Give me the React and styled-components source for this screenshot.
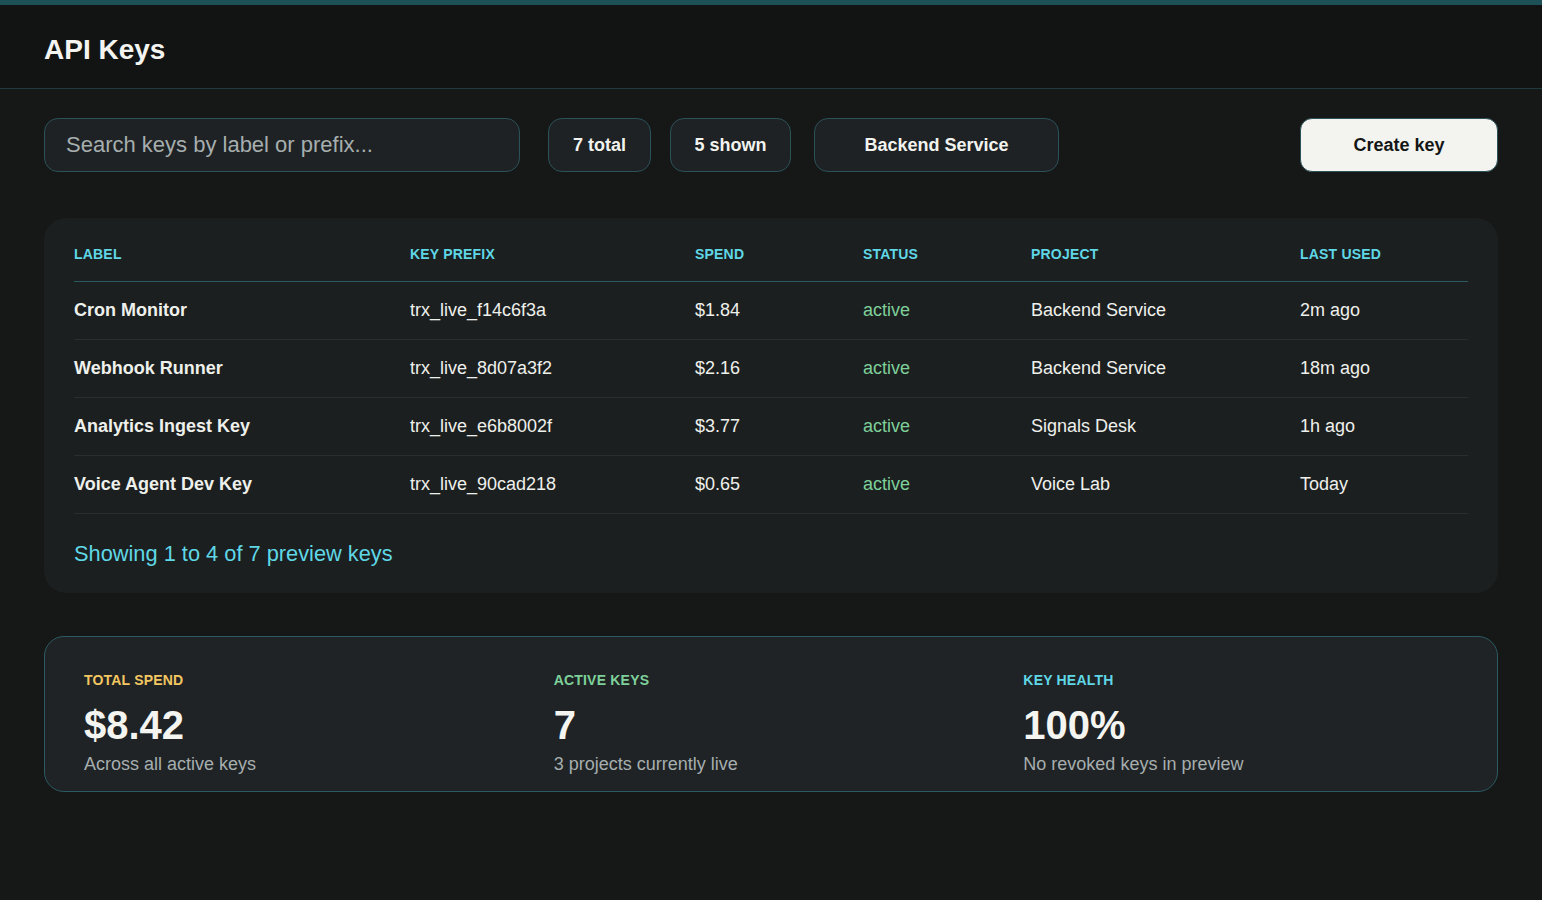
import React from "react";
import styled, { createGlobalStyle } from "styled-components";

const Global = createGlobalStyle`
  html, body { margin: 0; background: #161818; }
  body { font-family: "Liberation Sans", Arial, sans-serif; color: #f2f3ef; }
`;

const Header = styled.header`
  border-top: 5px solid #1e5058;
  background: #121414;
  height: 89px;
  border-bottom: 1px solid #1f3b40;
  display: flex;
  align-items: center;
  padding: 6px 44px 0;
  box-sizing: border-box;
`;
const Title = styled.h1`
  margin: 0; font-size: 28px; font-weight: 700; color: #f4f4f0;
`;
const Main = styled.main`
  padding: 29px 44px 0;
`;
const Toolbar = styled.div`
  display: flex; align-items: center; height: 54px;
`;
const Search = styled.input`
  width: 476px; height: 54px; box-sizing: border-box;
  background: #1e2224; border: 1px solid #2b5258; border-radius: 14px;
  padding: 0 21px; font: 22px "Liberation Sans", Arial, sans-serif; color: #e0e4e4;
  outline: none;
  &::placeholder { color: #a6aeae; }
`;
const Pill = styled.div`
  height: 54px; box-sizing: border-box; width: ${p => p.w}px; margin-left: ${p => p.ml}px;
  display: flex; align-items: center; justify-content: center;
  background: #1e2224; border: 1px solid #2b5258; border-radius: 14px;
  font-size: 18px; font-weight: 700; color: #f2f3ef;
`;
const Create = styled.button`
  margin-left: auto; width: 198px; height: 54px;
  background: #f3f4ef; border: 1px solid #2b5258; border-radius: 12px;
  font: 700 18px "Liberation Sans", Arial, sans-serif; color: #141616;
`;
const Card = styled.section`
  margin-top: 46px; background: #1c1f1f; border-radius: 22px;
  padding: 18px 30px 26px;
`;
const cols = "336px 285px 168px 168px 269px 1fr";
const HeadRow = styled.div`
  display: grid; grid-template-columns: ${cols}; height: 46px; align-items: center;
  box-sizing: border-box; padding-bottom: 10px;
  border-bottom: 1px solid #2b5a62;
  font-size: 14px; font-weight: 700; color: #5fd7e6; letter-spacing: 0.2px;
`;
const Row = styled.div`
  display: grid; grid-template-columns: ${cols}; height: 57px; align-items: center;
  border-bottom: 1px solid #2a2e2e; font-size: 18px; color: #eef0ec;
`;
const LabelCell = styled.div` font-weight: 700; `;
const Status = styled.div` color: #7ed09a; `;
const Footer = styled.div`
  margin-top: 27px; font-size: 21.8px; color: #5fd7e6;
`;
const Stats = styled.section`
  margin-top: 43px; background: #1f2325; border: 1px solid #2b5a62; border-radius: 20px;
  padding: 35px 4px 14px 39px; display: grid; grid-template-columns: repeat(3, 1fr);
`;
const StatLabel = styled.div`
  font-size: 14px; font-weight: 700; color: ${p => p.c}; letter-spacing: 0.2px;
`;
const StatValue = styled.div`
  font-size: 40px; font-weight: 700; margin-top: 14px; color: #f4f4f0; line-height: 46px;
`;
const StatSub = styled.div`
  font-size: 18px; color: #a6aeae; margin-top: 3px; line-height: 26px;
`;

const rows = [
  ["Cron Monitor", "trx_live_f14c6f3a", "$1.84", "Backend Service", "2m ago"],
  ["Webhook Runner", "trx_live_8d07a3f2", "$2.16", "Backend Service", "18m ago"],
  ["Analytics Ingest Key", "trx_live_e6b8002f", "$3.77", "Signals Desk", "1h ago"],
  ["Voice Agent Dev Key", "trx_live_90cad218", "$0.65", "Voice Lab", "Today"],
];

export default function App() {
  return (
    <>
      <Global />
      <Header><Title>API Keys</Title></Header>
      <Main>
        <Toolbar>
          <Search placeholder="Search keys by label or prefix..." />
          <Pill w={103} ml={28}>7 total</Pill>
          <Pill w={121} ml={19}>5 shown</Pill>
          <Pill w={245} ml={23}>Backend Service</Pill>
          <Create>Create key</Create>
        </Toolbar>
        <Card>
          <HeadRow>
            <div>LABEL</div><div>KEY PREFIX</div><div>SPEND</div><div>STATUS</div><div>PROJECT</div><div>LAST USED</div>
          </HeadRow>
          {rows.map(r => (
            <Row key={r[1]}>
              <LabelCell>{r[0]}</LabelCell><div>{r[1]}</div><div>{r[2]}</div>
              <Status>active</Status><div>{r[3]}</div><div>{r[4]}</div>
            </Row>
          ))}
          <Footer>Showing 1 to 4 of 7 preview keys</Footer>
        </Card>
        <Stats>
          <div><StatLabel c="#f2c661">TOTAL SPEND</StatLabel><StatValue>$8.42</StatValue><StatSub>Across all active keys</StatSub></div>
          <div><StatLabel c="#7ed09a">ACTIVE KEYS</StatLabel><StatValue>7</StatValue><StatSub>3 projects currently live</StatSub></div>
          <div><StatLabel c="#5fd7e6">KEY HEALTH</StatLabel><StatValue>100%</StatValue><StatSub>No revoked keys in preview</StatSub></div>
        </Stats>
      </Main>
    </>
  );
}
